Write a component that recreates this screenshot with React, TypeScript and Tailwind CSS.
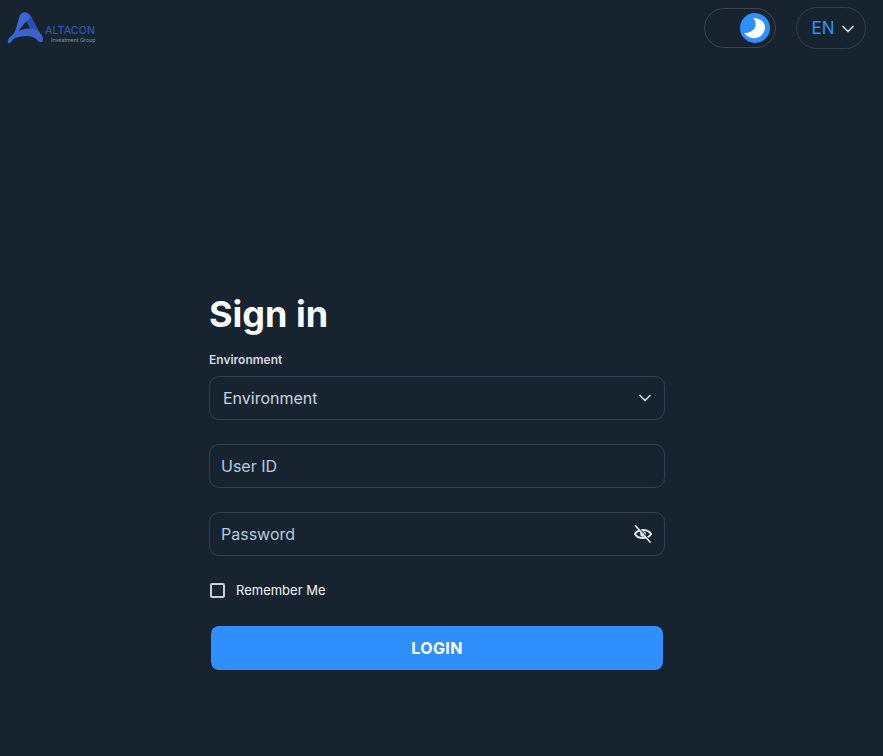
import { ChevronDown } from "lucide-react";

function Logo() {
  return (
    <div className="relative h-[56px] w-[110px]">
      <svg className="absolute left-[6px] top-[10px]" width="40" height="36" viewBox="0 0 40 36" fill="none">
        <path d="M19 3 C22 2 24 4 25 6 L35 25 C37 29 35 32 32 29 L24 18 L20 11 Z" fill="#2b4fb0" />
        <path d="M14 5 C16 2 20 1 22 4 L24 8 C20 11 17 15 14 19 C11 23 8 28 6 31 C4 34 1 34 2 30 C3 27 6 26 8 23 C10 20 12 11 14 5 Z" fill="#3a66d6" />
        <path d="M7 25 C13 19 23 17 30 20 C34 22 37 26 37 29 C37 33 34 33 32 31 C28 26 20 24 7 29 Z" fill="#3b63c9" />
      </svg>
      <span className="absolute left-[45px] top-[26px] font-['Inter',sans-serif] text-[10.7px] leading-[10px] font-medium text-[#2f55b8]">ALTACON</span>
      <span className="absolute left-[51px] top-[37px] font-['Inter',sans-serif] text-[5.3px] leading-[6px] whitespace-nowrap text-[#8a94a6]">Investment Group</span>
    </div>
  );
}

function MoonToggle() {
  return (
    <div className="flex h-[40px] w-[72px] items-center justify-end rounded-full border border-[#3d4654] pr-[5px]">
      <div className="h-[30px] w-[30px] rounded-full bg-[#2f90fd]">
        <svg width="30" height="30" viewBox="0 0 30 30">
          <path d="M13 5 C16 8 17 13 13.5 16.5 C11 19 7.5 20.5 4 20 C7 24 12 26 16 25 C22 24 25.5 18 25 13.5 C24.5 8.5 19 4.5 13 5 Z" fill="#ffffff" />
        </svg>
      </div>
    </div>
  );
}

function EyeSlash() {
  return (
    <svg width="18" height="18" viewBox="0 0 18 18" fill="none" stroke="#e2e6eb" strokeWidth="1.9" strokeLinecap="round">
      <path d="M0.9 9 C4 3.6 14 3.6 17.1 9 C14 14.4 4 14.4 0.9 9 Z" />
      <circle cx="9" cy="9" r="2.8" fill="#e2e6eb" stroke="none" />
      <path d="M2.6 0.8 L17 17" stroke="#17232f" strokeWidth="1.6" />
      <path d="M1.5 0.8 L16 17" strokeWidth="1.7" />
    </svg>
  );
}

export default function App() {
  return (
    <div className="min-h-[756px] bg-[#17232f] font-['Inter',sans-serif]">
      <header className="flex h-[56px] items-center justify-between pr-[17px]">
        <Logo />
        <div className="flex items-center gap-[20px]">
          <MoonToggle />
          <button className="flex h-[42px] w-[70px] items-center justify-center gap-[3px] rounded-full border border-[#333d4b] pt-[1px] pl-[7px] text-[17px] text-[#2f90fd]">
            EN
            <ChevronDown size={20} strokeWidth={2} className="text-[#d5d9df]" />
          </button>
        </div>
      </header>

      <main className="ml-[209px] w-[456px] pt-[235px]">
        <h1 className="text-[36px] leading-[46px] font-bold text-[#f8fafc]">Sign in</h1>
        <label className="mt-[15px] block text-[12px] leading-[16px] font-semibold text-[#d5d9e0]">Environment</label>
        <div className="mt-[8px] flex h-[44px] items-center justify-between rounded-[10px] border border-[#323f52] pr-[9px] pl-[13px] text-[16px] text-[#cbd5e1]">
          Environment
          <ChevronDown size={20} strokeWidth={2} className="text-[#d5d9df]" />
        </div>
        <div className="mt-[24px] flex h-[44px] items-center rounded-[10px] border border-[#323f52] px-[11px] text-[16px] text-[#b9cadb]">
          User ID
        </div>
        <div className="mt-[24px] flex h-[44px] items-center justify-between rounded-[10px] border border-[#323f52] pr-[12px] pl-[11px] text-[16px] text-[#b9cadb]">
          Password
          <EyeSlash />
        </div>
        <div className="mt-[26px] flex items-center gap-[11px] pl-[1px]">
          <span className="h-[15px] w-[15px] rounded-[2px] border-2 border-[#c9ced6]" />
          <span className="text-[13px] leading-[16px] font-normal text-[#f3f5f8]">Remember Me</span>
        </div>
        <button className="mx-[2px] mt-[28px] h-[44px] w-[452px] rounded-[8px] bg-[#2f90fd] text-[16px] font-bold tracking-[0.4px] text-white">
          LOGIN
        </button>
      </main>
    </div>
  );
}
